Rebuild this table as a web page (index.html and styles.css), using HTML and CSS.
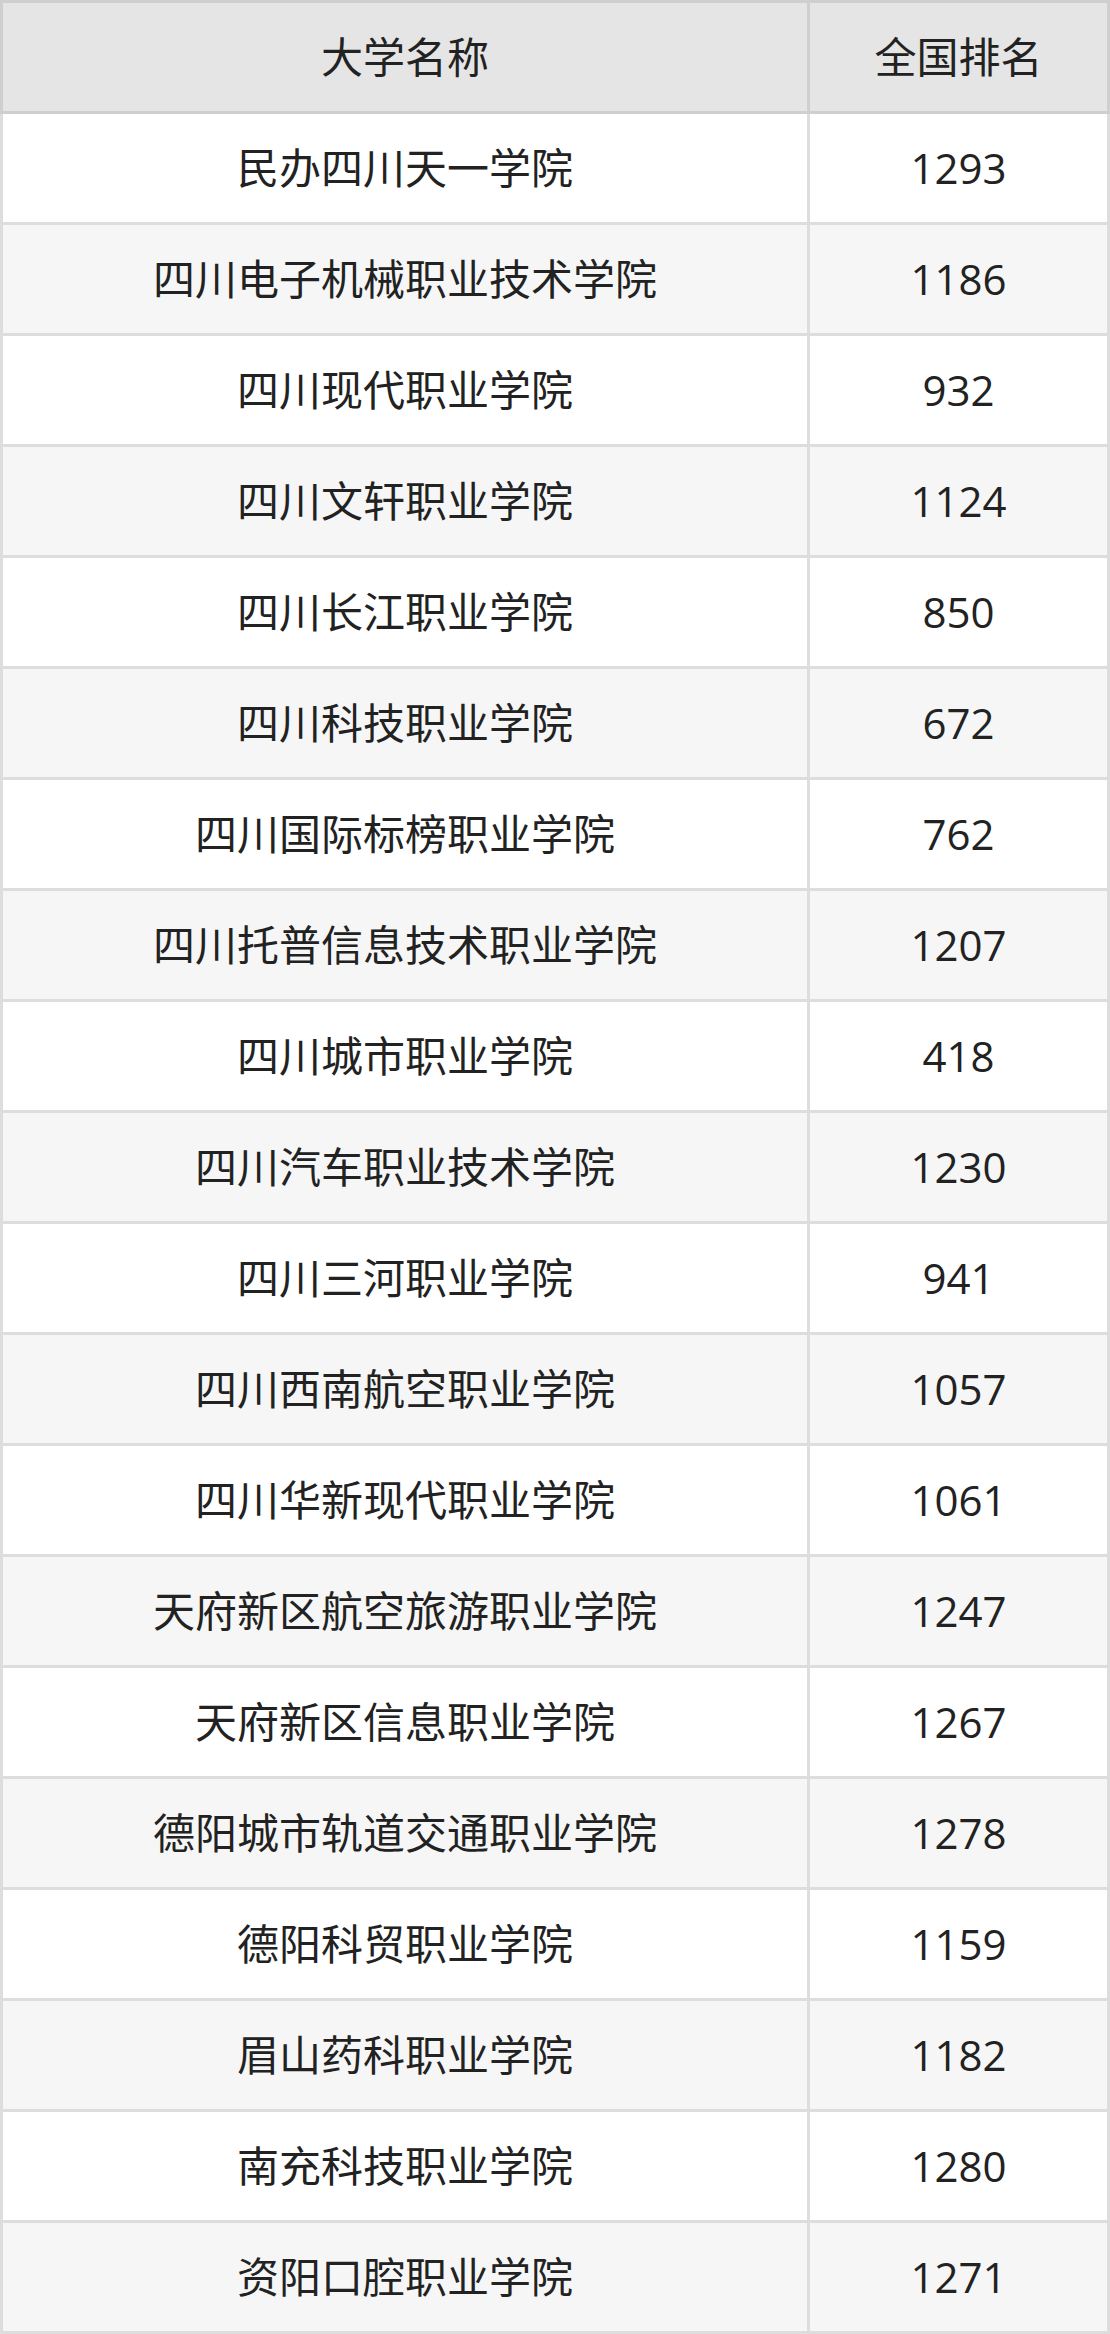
FILE: index.html
```html
<!DOCTYPE html>
<html lang="zh-CN">
<head>
<meta charset="utf-8">
<title>大学排名</title>
<link rel="stylesheet" href="styles.css">
</head>
<body>
<div class="table">
  <div class="cell head first">大学名称</div><div class="cell head">全国排名</div>
  <div class="cell first">民办四川天一学院</div><div class="cell">1293</div>
  <div class="cell first alt">四川电子机械职业技术学院</div><div class="cell alt">1186</div>
  <div class="cell first">四川现代职业学院</div><div class="cell">932</div>
  <div class="cell first alt">四川文轩职业学院</div><div class="cell alt">1124</div>
  <div class="cell first">四川长江职业学院</div><div class="cell">850</div>
  <div class="cell first alt">四川科技职业学院</div><div class="cell alt">672</div>
  <div class="cell first">四川国际标榜职业学院</div><div class="cell">762</div>
  <div class="cell first alt">四川托普信息技术职业学院</div><div class="cell alt">1207</div>
  <div class="cell first">四川城市职业学院</div><div class="cell">418</div>
  <div class="cell first alt">四川汽车职业技术学院</div><div class="cell alt">1230</div>
  <div class="cell first">四川三河职业学院</div><div class="cell">941</div>
  <div class="cell first alt">四川西南航空职业学院</div><div class="cell alt">1057</div>
  <div class="cell first">四川华新现代职业学院</div><div class="cell">1061</div>
  <div class="cell first alt">天府新区航空旅游职业学院</div><div class="cell alt">1247</div>
  <div class="cell first">天府新区信息职业学院</div><div class="cell">1267</div>
  <div class="cell first alt">德阳城市轨道交通职业学院</div><div class="cell alt">1278</div>
  <div class="cell first">德阳科贸职业学院</div><div class="cell">1159</div>
  <div class="cell first alt">眉山药科职业学院</div><div class="cell alt">1182</div>
  <div class="cell first">南充科技职业学院</div><div class="cell">1280</div>
  <div class="cell first alt">资阳口腔职业学院</div><div class="cell alt">1271</div>
</div>
</body>
</html>
```

FILE: styles.css
```css
html, body {
  margin: 0;
  padding: 0;
  background: #ffffff;
}

.table {
  display: grid;
  grid-template-columns: 810px 300px;
  width: 1110px;
  font-family: "Open Sans", "Noto Sans CJK SC", sans-serif;
  font-size: 42px;
  line-height: 1;
  color: #222222;
}

.cell {
  box-sizing: border-box;
  height: 111px;
  display: flex;
  align-items: center;
  justify-content: center;
  background: #ffffff;
  border-right: 3px solid #dddddd;
  border-bottom: 3px solid #dddddd;
}

.cell.first {
  border-left: 3px solid #dddddd;
}

.cell.alt {
  background: #f6f6f6;
}

.cell.head {
  height: 114px;
  background: #e5e5e5;
  border-top: 3px solid #cfcfcf;
  border-right-color: #cfcfcf;
  border-bottom-color: #cfcfcf;
}

.cell.head.first {
  border-left-color: #cfcfcf;
}
```
